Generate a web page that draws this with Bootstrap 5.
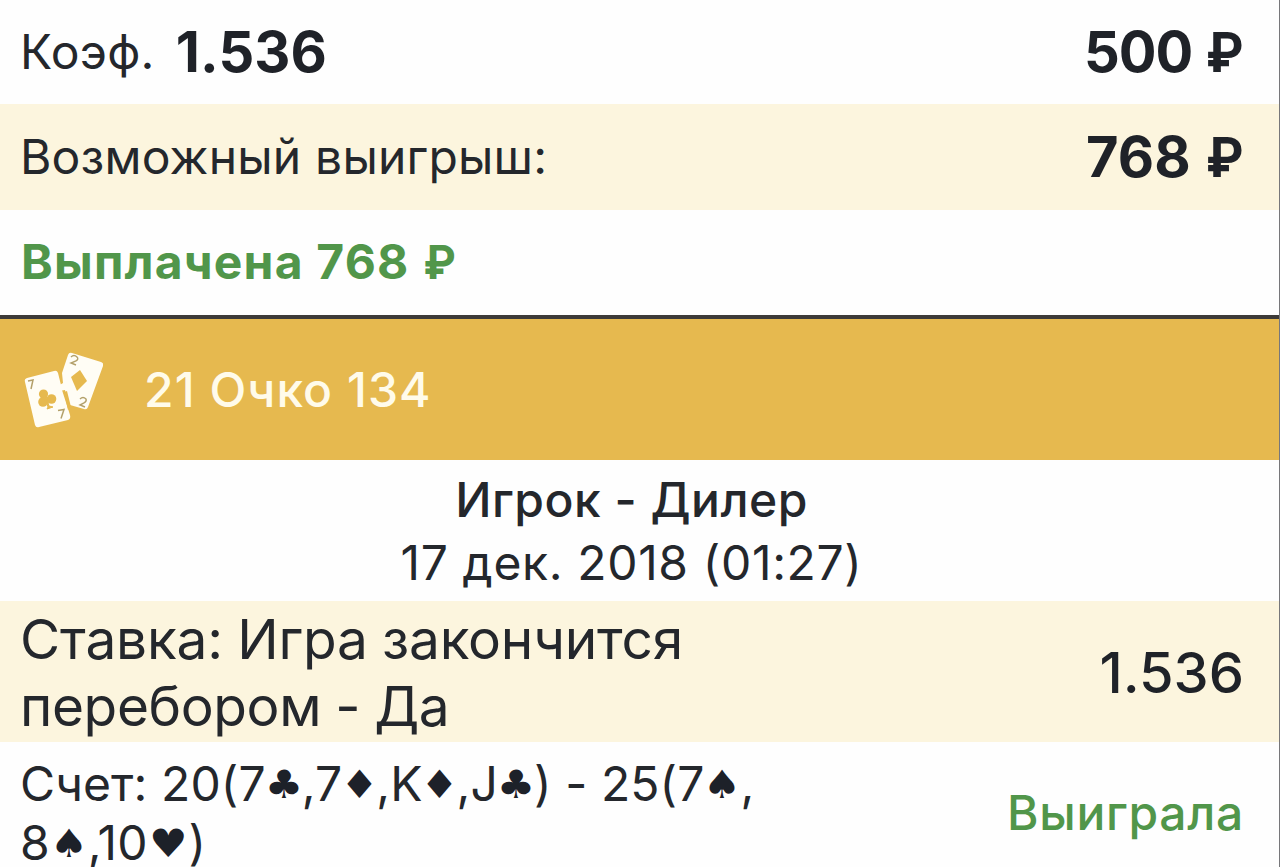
<!DOCTYPE html>
<html lang="ru">
<head>
    <meta charset="UTF-8">
    <meta name="viewport" content="width=device-width, initial-scale=1.0">
    <title>Купон - 21 Очко</title>
    <link href="https://cdn.jsdelivr.net/npm/bootstrap@5.3.0/dist/css/bootstrap.min.css" rel="stylesheet">
    <style>
        body { font-family: Inter, "Noto Sans", sans-serif; font-size: 48px; color: #24272c; background: #fefefe; overflow: hidden; }
        .coupon { height: 867px; border-right: 1px solid #77777a; white-space: nowrap; }
        .coupon-row { padding: 0 35px 0 20px; flex: none; line-height: 1; }
        .row-sum { height: 104px; letter-spacing: .3px; }
        .row-win { height: 106px; letter-spacing: .2px; }
        .row-paid { height: 105px; padding-left: 21px; letter-spacing: 1.2px; color: #51964a; }
        .row-game { height: 145px; padding-left: 23px; background: #e6b94f; border-top: 4px solid #3d3a38; color: #fffbea; letter-spacing: 1.05px; }
        .row-match { height: 141px; line-height: 63px; padding-right: 36px; }
        .row-bet { height: 141px; padding-top: 2px; }
        .row-score { height: 125px; padding: 12px 35px 0 20px; }
        .cream { background: #fcf5de; }
        .medium { font-weight: 500; }
        .amount { font-size: 56px; color: #1f2228; }
        .stake { letter-spacing: -1px; }
        .win { letter-spacing: .2px; }
        .coef { margin-left: 21px; letter-spacing: .1px; }
        .rub { display: inline-block; font-family: Roboto, Inter, sans-serif; letter-spacing: 0; transform: scaleX(.93); transform-origin: right; }
        .cards-icon { width: 80px; height: 76px; margin-right: 41px; }
        .teams { letter-spacing: .5px; }
        .date { letter-spacing: .65px; }
        .bet-name { font-size: 55px; line-height: 67px; letter-spacing: -.2px; word-spacing: -1px; }
        .bet-value { word-spacing: -1px; letter-spacing: -.4px; }
        .score { line-height: 59px; letter-spacing: .1px; }
        .suit { display: inline-block; width: 36px; text-align: center; font-family: "DejaVu Sans", sans-serif; font-size: 39px; line-height: 0; vertical-align: 3px; letter-spacing: 0; color: #1d2129; transform: scaleX(1.1); }
        .suit-d { width: 34px; }
        .suit-s { width: 38px; }
        .suit-h { width: 41px; }
        .result { letter-spacing: .7px; color: #51964a; height: 118px; }
    </style>
</head>
<body>
    <div class="coupon d-flex flex-column">
        <div class="coupon-row row-sum d-flex align-items-center justify-content-between">
            <div class="d-flex align-items-center">
                <span>Коэф.</span>
                <span class="amount coef fw-bold">1.536</span>
            </div>
            <div class="amount stake fw-bold">500 <span class="rub">₽</span></div>
        </div>
        <div class="coupon-row row-win cream d-flex align-items-center justify-content-between">
            <span>Возможный выигрыш:</span>
            <div class="amount win fw-bold">768 <span class="rub">₽</span></div>
        </div>
        <div class="coupon-row row-paid d-flex align-items-center fw-bold">
            <div>Выплачена 768 <span class="rub">₽</span></div>
        </div>
        <div class="coupon-row row-game d-flex align-items-center medium">
            <svg class="cards-icon" viewBox="23 352 80 76" fill="#fffdf5">
                <!-- two of diamonds -->
                <path d="M72 353l29 9q3 1 2 4l-15 41q-1 3-4 2l-14-4q-2-1-3-4l-2-11-6 1-1-5 5-3-1-10 6-18q1-3 4-2z"/>
                <path d="M80 370l7 11-10 10-6-14z" fill="#e6b94f"/>
                <g fill="none" stroke="#b3a06a" stroke-width="1.4">
                    <path d="M71 357q3-3 6 0 2 2-1 4l-5 2 5 2"/>
                    <path d="M80 399q3-3 6 0 1 2-2 4l-4 2 5 2"/>
                </g>
                <!-- seven of clubs -->
                <path d="M27 378l27-7q3-1 4 2l3 12 1 5 8 25q1 4-2 5l-29 7q-3 1-4-2l-10-43q-1-3 2-4z"/>
                <path d="M64 392l3-1 4 16-3 3z" fill="#e6b94f"/>
                <g fill="#e6b94f">
                    <circle cx="43.5" cy="394" r="4.6"/>
                    <circle cx="43" cy="402" r="4.8"/>
                    <circle cx="51.500" cy="399" r="4.8"/>
                    <path d="M46 396l3 10 4 1-6 2 1-2-3-9z" stroke="#e6b94f"/>
                </g>
                <g fill="none" stroke="#b3a06a" stroke-width="1.5">
                    <path d="M28 381l5-1-2 9"/>
                    <path d="M58 410.500l6-1-3 9"/>
                </g>
            </svg>
            <span>21 Очко 134</span>
        </div>
        <div class="coupon-row row-match d-flex flex-column justify-content-center text-center">
            <div class="teams medium">Игрок - Дилер</div>
            <div class="date">17 дек. 2018 (01:27)</div>
        </div>
        <div class="coupon-row row-bet cream d-flex align-items-center justify-content-between">
            <div class="bet-name">Ставка: Игра закончится<br><span class="bet-value">перебором - Да</span></div>
            <div class="amount medium">1.536</div>
        </div>
        <div class="coupon-row row-score d-flex align-items-start justify-content-between">
            <div class="score">Счет: 20(7<span class="suit">♣</span>,7<span class="suit suit-d">♦</span>,K<span class="suit suit-d">♦</span>,J<span class="suit">♣</span>) - 25(7<span class="suit">♠</span>,<br>8<span class="suit suit-s">♠</span>,10<span class="suit suit-h">♥</span>)</div>
            <div class="result medium d-flex align-items-center">Выиграла</div>
        </div>
    </div>

    <script src="https://cdn.jsdelivr.net/npm/bootstrap@5.3.0/dist/js/bootstrap.bundle.min.js"></script>
</body>
</html>
